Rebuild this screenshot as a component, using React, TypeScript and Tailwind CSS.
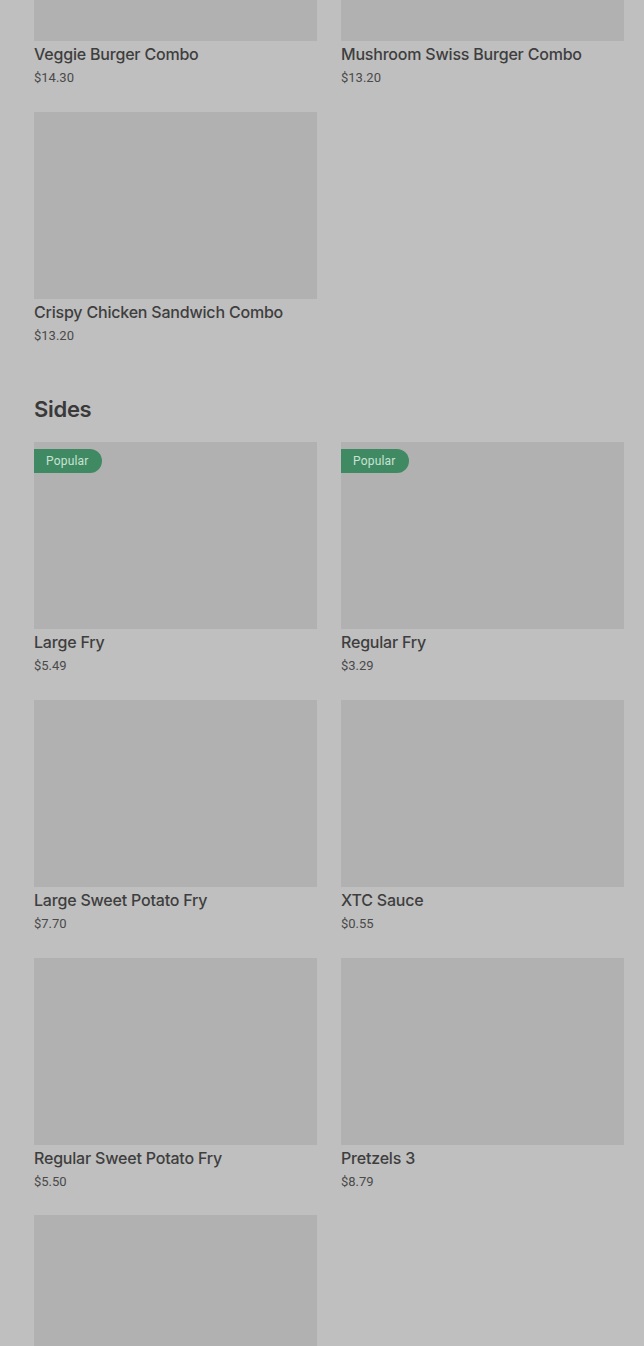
import React from 'react';

type Item = { name: string; price: string; popular?: boolean };

const combos: Item[] = [
  { name: 'Veggie Burger Combo', price: '$14.30' },
  { name: 'Mushroom Swiss Burger Combo', price: '$13.20' },
  { name: 'Crispy Chicken Sandwich Combo', price: '$13.20' },
];

const sides: Item[] = [
  { name: 'Large Fry', price: '$5.49', popular: true },
  { name: 'Regular Fry', price: '$3.29', popular: true },
  { name: 'Large Sweet Potato Fry', price: '$7.70' },
  { name: 'XTC Sauce', price: '$0.55' },
  { name: 'Regular Sweet Potato Fry', price: '$5.50' },
  { name: 'Pretzels 3', price: '$8.79' },
  { name: '', price: '' },
];

const Card: React.FC<{ item: Item }> = ({ item }) => (
  <div className="flex flex-col h-[257.67px]">
    <div className="relative h-[187px] shrink-0 bg-[#b1b1b1]">
      {item.popular && (
        <span className="absolute left-0 top-[7px] h-6 pl-3 pr-[13px] flex items-center rounded-r-full bg-[#3f8a63] text-[12px] tracking-[0.2px] text-[#c9e2d3]">
          Popular
        </span>
      )}
    </div>
    {item.name && (
      <>
        <div className="mt-[1px] text-[16px] leading-6 font-medium tracking-[-0.2px] text-[#3e3e3e] font-['Inter',sans-serif]">
          {item.name}
        </div>
        <div className="mt-[2px] text-[13px] leading-[20px] text-[#4a4a4a]">{item.price}</div>
      </>
    )}
  </div>
);

export default function App() {
  return (
    <div className="w-[644px] h-[1346px] overflow-hidden bg-[#bfbfbf] font-['Roboto',sans-serif]">
      <div className="pl-[34px] pr-5 -mt-[146px]">
        <div className="grid grid-cols-2 gap-x-6">
          {combos.map((c, i) => (
            <Card key={i} item={c} />
          ))}
        </div>
        <h2 className="mt-[26px] mb-[19px] text-[22px] leading-7 font-semibold tracking-[-0.3px] text-[#3a3a3a] font-['Inter',sans-serif]">
          Sides
        </h2>
        <div className="grid grid-cols-2 gap-x-6">
          {sides.map((c, i) => (
            <Card key={i} item={c} />
          ))}
        </div>
      </div>
    </div>
  );
}
